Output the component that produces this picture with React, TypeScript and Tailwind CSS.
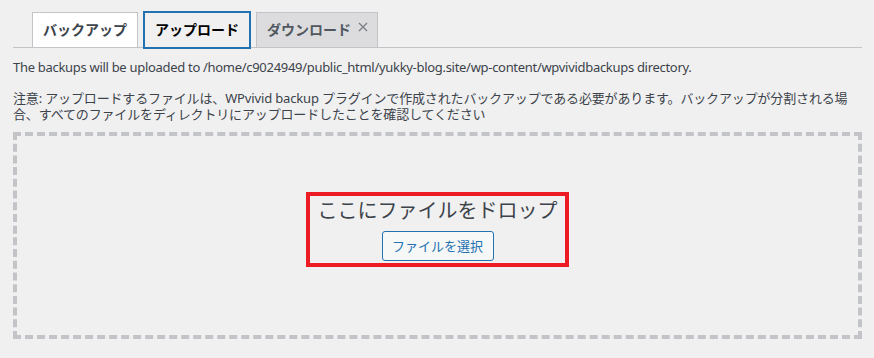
import React from "react";

export default function App() {
  return (
    <div className="w-[874px] h-[358px] bg-[#f0f0f1] overflow-hidden pl-[13px] pr-[12px] [font-family:'Noto_Sans','Noto_Sans_CJK_JP',sans-serif]">
      <div className="flex items-end border-b border-[#c3c4c7] pl-[19px] pt-[12px]">
        <div className="-mb-px h-[36px] px-[10px] flex items-center border border-[#c3c4c7] bg-white text-[14px] font-bold text-[#3c434a] leading-[24px]">
          バックアップ
        </div>
        <div className="relative z-10 -mb-px ml-[6px] h-[36px] px-[10px] flex items-center border border-[#2271b1] ring-1 ring-[#2271b1] bg-[#f0f0f1] text-[14px] font-bold text-[#000000] leading-[24px]">
          アップロード
        </div>
        <div className="-mb-px ml-[6px] h-[36px] pl-[10px] pr-[9px] flex items-center border border-[#c3c4c7] bg-[#dcdcde] text-[14px] font-bold text-[#50575e] leading-[24px]">
          <span>ダウンロード</span>
          <svg
            className="ml-[7px] -mt-[6px]"
            width="10"
            height="10"
            viewBox="0 0 10 10"
          >
            <path
              d="M1 1 L9 9 M9 1 L1 9"
              stroke="#787c82"
              strokeWidth="1.2"
              fill="none"
            />
          </svg>
        </div>
      </div>

      <p className="mt-[9px] text-[13px] leading-[20px] text-[#3c434a] whitespace-nowrap tracking-[-0.3px]">
        The backups will be uploaded to
        /home/c9024949/public_html/yukky-blog.site/wp-content/wpvividbackups
        directory.
      </p>

      <p className="mt-[13px] text-[13px] leading-[16px] text-[#3c434a] tracking-[-0.15px]">
        <span className="block whitespace-nowrap">
          注意: アップロードするファイルは、WPvivid backup
          プラグインで作成されたバックアップである必要があります。バックアップが分割される場
        </span>
        <span className="block whitespace-nowrap">
          合、すべてのファイルをディレクトリにアップロードしたことを確認してください
        </span>
      </p>

      <div className="mt-[10px] h-[207px] border-4 border-dashed border-[#c3c4c7] flex flex-col items-center pt-[56px]">
        <div className="w-[263px] border-4 border-[#ed1c24] flex flex-col items-center pt-[1px] pb-[2px]">
          <div className="text-[20px] leading-[28px] text-[#3c434a]">
            ここにファイルをドロップ
          </div>
          <button className="mt-[6px] h-[30px] w-[112px] border border-[#2271b1] rounded-[3px] bg-[#f6f7f7] text-[#2271b1] text-[13px] leading-[28px]">
            ファイルを選択
          </button>
        </div>
      </div>
    </div>
  );
}
